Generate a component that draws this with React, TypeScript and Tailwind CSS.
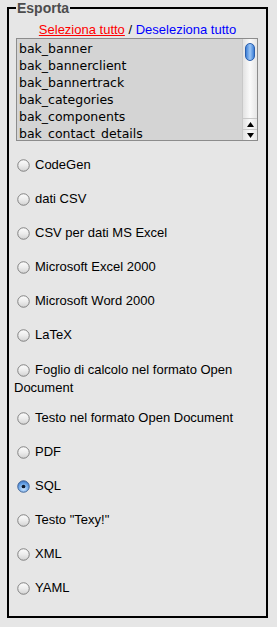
import React from "react";

const tables = [
  "bak_banner",
  "bak_bannerclient",
  "bak_bannertrack",
  "bak_categories",
  "bak_components",
  "bak_contact_details",
];

const formats = [
  "CodeGen",
  "dati CSV",
  "CSV per dati MS Excel",
  "Microsoft Excel 2000",
  "Microsoft Word 2000",
  "LaTeX",
  "Foglio di calcolo nel formato Open Document",
  "Testo nel formato Open Document",
  "PDF",
  "SQL",
  'Testo "Texy!"',
  "XML",
  "YAML",
];

function Radio({ checked }: { checked?: boolean }) {
  return (
    <span className="inline-block align-middle ml-[3px] mr-[5px]">
      <svg width="13" height="13" viewBox="0 0 14 14" className="block">
        <defs>
          <linearGradient id="rOff" x1="0" y1="0" x2="0" y2="1">
            <stop offset="0" stopColor="#fdfdfd" />
            <stop offset="0.5" stopColor="#ececec" />
            <stop offset="1" stopColor="#d2d2d2" />
          </linearGradient>
          <radialGradient id="rOn" cx="0.5" cy="0.7" r="0.7">
            <stop offset="0" stopColor="#cfe6ff" />
            <stop offset="0.6" stopColor="#6fa8e8" />
            <stop offset="1" stopColor="#3a74c4" />
          </radialGradient>
        </defs>
        <circle
          cx="7"
          cy="7"
          r="6.2"
          fill={checked ? "url(#rOn)" : "url(#rOff)"}
          stroke={checked ? "#3b5f93" : "#7a7a7a"}
          strokeWidth="1"
        />
        {checked && <circle cx="7" cy="7" r="2" fill="#0d1a2e" />}
      </svg>
    </span>
  );
}

function Listbox() {
  return (
    <div className="flex h-[103px] border border-[#8c8c8c] bg-[#d4d4d4]">
      <div className="flex-1 pl-[2px] pt-[1px] overflow-hidden">
        {tables.map((t) => (
          <div
            key={t}
            className="h-[17px] leading-[17px] text-[12.5px] text-black whitespace-nowrap"
            style={{ fontFamily: '"DejaVu Sans", sans-serif' }}
          >
            {t}
          </div>
        ))}
      </div>
      <div className="w-[15px] flex flex-col border-l border-[#c8c8c8] bg-gradient-to-r from-[#e2e2e2] via-[#fafafa] to-[#e6e6e6]">
        <div className="flex-1 relative">
          <div className="absolute left-[2px] top-[4px] w-[10px] h-[18px] rounded-full border border-[#2a5fae] bg-gradient-to-r from-[#3d7fd6] via-[#9cc6f5] to-[#3d7fd6]" />
        </div>
        <div className="h-[11px] flex items-center justify-center border-t border-[#c8c8c8]">
          <svg width="7" height="5" viewBox="0 0 7 5">
            <path d="M3.5 0L7 5H0z" fill="#000" />
          </svg>
        </div>
        <div className="h-[11px] flex items-center justify-center border-t border-[#c8c8c8]">
          <svg width="7" height="5" viewBox="0 0 7 5">
            <path d="M0 0h7L3.5 5z" fill="#000" />
          </svg>
        </div>
      </div>
    </div>
  );
}

export default function App() {
  return (
    <div
      className="w-[277px] h-[627px] bg-[#e6e6e6] pt-[7px] pl-[7px]"
      style={{ fontFamily: '"Liberation Sans", Arial, sans-serif' }}
    >
      <fieldset className="relative w-[261px] h-[611px] border-2 border-black px-[5px] pt-[13px]">
        <legend className="absolute -top-[9px] left-[7px] bg-[#e6e6e6] px-[1px] text-[14px] leading-[16px] font-bold text-[#4d4d4d]">
          Esporta
        </legend>
        <div className="text-center text-[13px] leading-[16px]">
          <span className="text-[#ff0000] underline">Seleziona tutto</span>
          <span className="text-black"> / </span>
          <span className="text-[#0000ff]">Deseleziona tutto</span>
        </div>
        <div className="ml-[2px] mr-[3px]">
          <Listbox />
        </div>
        <div className="text-[13px] leading-[18px] text-black">
          {formats.map((f, i) => (
            <div
              key={f}
              className={
                i === 0
                  ? "mt-[15px]"
                  : f.startsWith("Foglio")
                  ? "mt-[17px] mb-[-4px]"
                  : "mt-[16px]"
              }
            >
              <Radio checked={f === "SQL"} />
              {f}
            </div>
          ))}
        </div>
      </fieldset>
    </div>
  );
}
